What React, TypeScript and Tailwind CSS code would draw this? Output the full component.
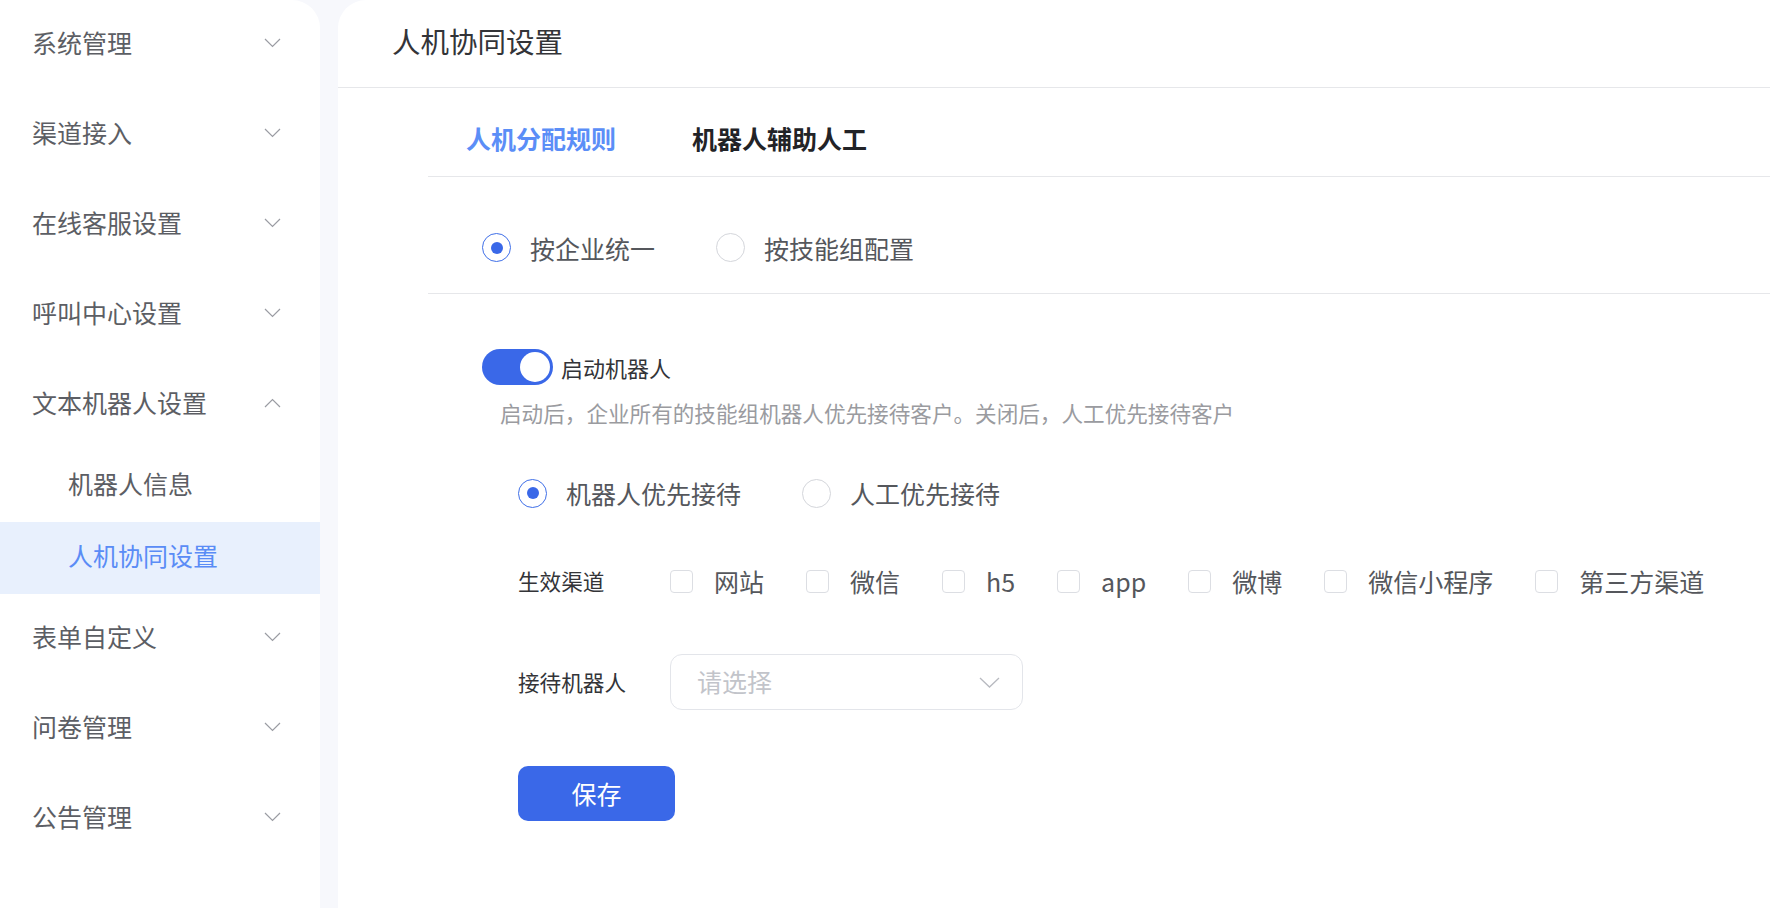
import React from "react";

const Chevron = ({ up = false, className = "" }: { up?: boolean; className?: string }) => (
  <svg width="17" height="10" viewBox="0 0 17 10" className={className}>
    <polyline
      points={up ? "1,9 8.5,1.5 16,9" : "1,1 8.5,8.5 16,1"}
      fill="none"
      stroke="#9a9ca3"
      strokeWidth="1.2"
    />
  </svg>
);

const Radio = ({ checked, label }: { checked: boolean; label: string }) => (
  <div className="flex items-center gap-[19px]">
    <span
      className={`flex h-[29px] w-[29px] items-center justify-center rounded-full border-[1.5px] ${
        checked ? "border-[#3f6fe8]" : "border-[#d4d6db]"
      }`}
    >
      {checked && <span className="h-[12px] w-[12px] rounded-full bg-[#3a68e8]" />}
    </span>
    <span className="text-[25px] leading-[36px] text-[#55575c]">{label}</span>
  </div>
);

const Checkbox = ({ label }: { label: string }) => (
  <div className="flex items-center gap-[21px]">
    <span className="h-[23px] w-[23px] rounded-[4px] border border-[#dcdee3] bg-white" />
    <span className="text-[25px] leading-[36px] text-[#55575c]">{label}</span>
  </div>
);

export default function App() {
  const top = ["系统管理", "渠道接入", "在线客服设置", "呼叫中心设置"];
  const bottom = ["表单自定义", "问卷管理", "公告管理"];
  const channels = ["网站", "微信", "h5", "app", "微博", "微信小程序", "第三方渠道"];

  return (
    <div className="flex h-[908px] w-[1770px] gap-[18px] overflow-hidden bg-[#f7f8fc] font-['Noto_Sans_CJK_SC','Liberation_Sans',sans-serif]">
      {/* Sidebar */}
      <aside className="w-[320px] shrink-0 rounded-tr-[28px] bg-white">
        {top.map((t) => (
          <div key={t} className="flex h-[90px] items-center justify-between pb-[4px] pl-[32px] pr-[39px]">
            <span className="text-[25px] text-[#5c5e64]">{t}</span>
            <Chevron />
          </div>
        ))}
        <div className="flex h-[90px] items-center justify-between pb-[4px] pl-[32px] pr-[39px]">
          <span className="text-[25px] text-[#5c5e64]">文本机器人设置</span>
          <Chevron up />
        </div>
        <div className="flex h-[72px] items-center pb-[4px] pl-[68px]">
          <span className="text-[25px] text-[#5c5e64]">机器人信息</span>
        </div>
        <div className="flex h-[72px] items-center bg-[#e8f0fd] pb-[4px] pl-[68px]">
          <span className="text-[25px] text-[#5a8cf6]">人机协同设置</span>
        </div>
        {bottom.map((t) => (
          <div key={t} className="flex h-[90px] items-center justify-between pb-[4px] pl-[32px] pr-[39px]">
            <span className="text-[25px] text-[#5c5e64]">{t}</span>
            <Chevron />
          </div>
        ))}
      </aside>

      {/* Main */}
      <main className="flex-1 rounded-tl-[28px] bg-white">
        <div className="flex h-[88px] items-center border-b border-[#e6e7ea] pb-[4px] pl-[54px]">
          <h1 className="text-[28.5px] text-[#333438]">人机协同设置</h1>
        </div>

        <div className="ml-[90px]">
          {/* Tabs */}
          <div className="flex h-[89px] items-center gap-[76px] border-b border-[#e6e7ea] pl-[38px] pt-[13px]">
            <span className="text-[25px] font-semibold text-[#5b8ef7]">人机分配规则</span>
            <span className="text-[25px] font-semibold text-[#222327]">机器人辅助人工</span>
          </div>

          {/* Scope radios */}
          <div className="flex h-[117px] items-center gap-[61px] border-b border-[#e6e7ea] pl-[54px] pt-[25px]">
            <Radio checked label="按企业统一" />
            <Radio checked={false} label="按技能组配置" />
          </div>

          {/* Form */}
          <div className="pl-[54px]">
            <div className="mt-[55px] flex items-center gap-[8px]">
              <span className="flex h-[36px] w-[71px] items-center justify-end rounded-full bg-[#3a68e8] pr-[3px]">
                <span className="h-[30px] w-[30px] rounded-full bg-white" />
              </span>
              <span className="text-[22px] text-[#333438]">启动机器人</span>
            </div>
            <p className="mt-[13px] pl-[18px] text-[21.6px] leading-[30px] text-[#9a9ba0]">
              启动后，企业所有的技能组机器人优先接待客户。关闭后，人工优先接待客户
            </p>

            <div className="pl-[36px]">
              <div className="mt-[47px] flex h-[36px] items-center gap-[61px]">
                <Radio checked label="机器人优先接待" />
                <Radio checked={false} label="人工优先接待" />
              </div>

              <div className="mt-[52px] flex h-[36px] items-center">
                <span className="w-[152px] shrink-0 text-[21.6px] text-[#333438]">生效渠道</span>
                <div className="flex items-center gap-[42px]">
                  {channels.map((c) => (
                    <Checkbox key={c} label={c} />
                  ))}
                </div>
              </div>

              <div className="mt-[55px] flex items-center">
                <span className="w-[152px] shrink-0 text-[21.6px] text-[#333438]">接待机器人</span>
                <div className="flex h-[56px] w-[353px] items-center justify-between rounded-[12px] border border-[#e3e5ea] pl-[26px] pr-[22px]">
                  <span className="text-[25px] text-[#c2c4ca]">请选择</span>
                  <svg width="21" height="11" viewBox="0 0 21 11">
                    <polyline points="1,1 10.5,10 20,1" fill="none" stroke="#b8bac0" strokeWidth="1.3" />
                  </svg>
                </div>
              </div>

              <button className="mt-[56px] flex h-[55px] w-[157px] items-center justify-center rounded-[10px] bg-[#3a68e8] text-[25px] text-white">
                保存
              </button>
            </div>
          </div>
        </div>
      </main>
    </div>
  );
}
